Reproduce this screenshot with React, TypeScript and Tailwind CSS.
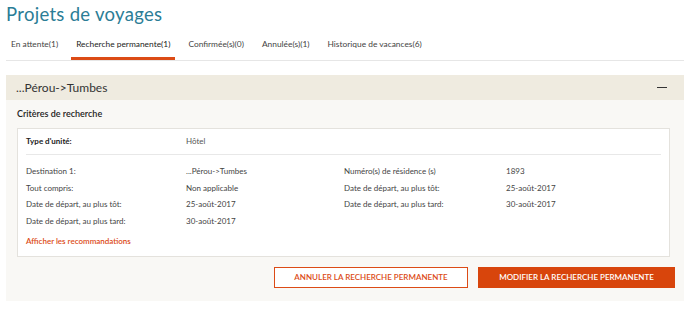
import React from 'react';

const tabs = [
  { label: 'En attente(1)', active: false },
  { label: 'Recherche permanente(1)', active: true },
  { label: 'Confirmée(s)(0)', active: false },
  { label: 'Annulée(s)(1)', active: false },
  { label: 'Historique de vacances(6)', active: false },
];

const rows: [string, string, string, string][] = [
  ['Destination 1:', '...Pérou->Tumbes', 'Numéro(s) de résidence (s)', '1893'],
  ['Tout compris:', 'Non applicable', 'Date de départ, au plus tôt:', '25-août-2017'],
  ['Date de départ, au plus tôt:', '25-août-2017', 'Date de départ, au plus tard:', '30-août-2017'],
  ['Date de départ, au plus tard:', '30-août-2017', '', ''],
];

export default function App() {
  return (
    <div className="w-[690px] h-[311px] bg-white overflow-hidden font-['Lato','Open_Sans',sans-serif] text-[#333]">
      <h1 className="pl-[6px] pt-[2px] text-[18.5px] leading-[24px] text-[#2b7d96] font-normal tracking-[0.3px]">
        Projets de voyages
      </h1>

      {/* Tabs */}
      <div className="mx-[6px] mt-[11px] flex border-b border-[#e6e6e6] h-[24px]">
        {tabs.map((t) => (
          <div
            key={t.label}
            className={`px-[5px] mr-[8px] text-[8.4px] leading-[14px] ${
              t.active ? 'border-b-[3px] border-[#dc4b16] text-[#222]' : 'text-[#444]'
            }`}
          >
            {t.label}
          </div>
        ))}
      </div>

      {/* Panel */}
      <div className="mx-[6px] mt-[14px] w-[678px] bg-[#f9f8f5]">
        <div className="h-[25px] bg-[#efebe0] flex items-center justify-between pl-[10px] pr-[17px]">
          <span className="text-[12px] font-normal text-[#333]">...Pérou-&gt;Tumbes</span>
          <span className="w-[10px] h-[1.5px] bg-[#333]" />
        </div>

        <div className="px-[11px] pt-[8px] pb-[13px]">
          <div className="text-[9px] font-semibold text-[#222] leading-[12px]">Critères de recherche</div>

          <div className="mt-[8px] w-[653px] bg-white border border-[#e4e2dd] px-[8px] pt-[7px] pb-[9px]">
            <div className="flex border-b border-[#e8e8e8] pb-[7px] text-[8px] leading-[11px]">
              <span className="w-[160px] font-bold text-[#222]">Type d'unité:</span>
              <span className="text-[#555]">Hôtel</span>
            </div>

            <div className="mt-[11px] flex flex-col gap-[5.6px] text-[8px] leading-[11px] text-[#444]">
              {rows.map((r, i) => (
                <div key={i} className="flex">
                  <span className="w-[160px]">{r[0]}</span>
                  <span className="w-[158px]">{r[1]}</span>
                  <span className="w-[162px]">{r[2]}</span>
                  <span>{r[3]}</span>
                </div>
              ))}
            </div>

            <div className="mt-[9px] text-[8px] leading-[11px] font-semibold text-[#dc4b16]">
              Afficher les recommandations
            </div>
          </div>

          <div className="mt-[10px] -mr-[2px] flex justify-end gap-[10px]">
            <button className="w-[194px] h-[21px] border border-[#dc4b16] bg-white text-[#dc4b16] text-[8px] font-semibold uppercase">
              Annuler la recherche permanente
            </button>
            <button className="w-[197px] h-[21px] bg-[#d8450c] text-white text-[8px] font-semibold uppercase">
              Modifier la recherche permanente
            </button>
          </div>
        </div>
      </div>
    </div>
  );
}
